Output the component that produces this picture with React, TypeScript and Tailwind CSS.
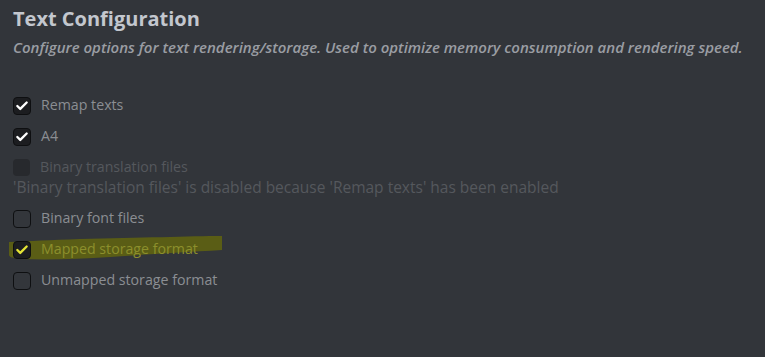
import { Check } from 'lucide-react';

type Option = {
  label: string;
  checked: boolean;
  disabled?: boolean;
  highlighted?: boolean;
};

const options: Option[] = [
  { label: 'Remap texts', checked: true },
  { label: 'A4', checked: true },
  { label: 'Binary translation files', checked: false, disabled: true },
  { label: 'Binary font files', checked: false },
  { label: 'Mapped storage format', checked: true, highlighted: true },
  { label: 'Unmapped storage format', checked: false },
];

function Box({ checked, disabled, highlighted }: { checked: boolean; disabled?: boolean; highlighted?: boolean }) {
  if (disabled) {
    return <div className="w-[17px] h-[17px] rounded-[4px] bg-[#27292d]" />;
  }
  return (
    <div
      className={`w-[18px] h-[18px] rounded-[4px] border border-[#0e0f11] flex items-center justify-center ${
        checked ? 'bg-[#1c1d20]' : 'bg-[#33363b]'
      }`}
    >
      {checked && (
        <Check
          className={`w-[14px] h-[14px] ${highlighted ? 'text-[#e4e436]' : 'text-white'}`}
          strokeWidth={4}
        />
      )}
    </div>
  );
}

function Row({ option }: { option: Option }) {
  const labelColor = option.disabled
    ? 'text-[#55585d]'
    : option.highlighted
      ? 'text-[#8c8f2c]'
      : 'text-[#8b8e93]';
  return (
    <div className="relative flex items-center gap-[10px] h-[31px] pl-[13px]">
      {option.highlighted && (
        <svg className="absolute left-0 -top-[6px] w-[230px] h-[34px]" viewBox="0 0 230 34">
          <path
            d="M9 14 C30 13 50 12 80 11 C140 10 190 8 222 8 L222 22 C190 24 150 26 110 29 C80 31 50 32 20 31 C13 30 9 29 9 27 Z"
            fill="#5a5d15"
          />
        </svg>
      )}
      <div className="relative">
        <Box checked={option.checked} disabled={option.disabled} highlighted={option.highlighted} />
      </div>
      <span className={`relative text-[14.2px] leading-none ${labelColor}`}>{option.label}</span>
    </div>
  );
}

export default function App() {
  return (
    <div
      className="w-[765px] h-[357px] bg-[#32353a] overflow-hidden"
      style={{ fontFamily: '"Open Sans", "Noto Sans", sans-serif' }}
    >
      <div className="pt-[6px]">
        <h1 className="pl-[13px] text-[20px] font-bold text-[#c3c7ce] leading-[26px]">Text Configuration</h1>
        <p className="pl-[13px] mt-[5px] text-[15px] italic font-semibold text-[#9a9da3] leading-[20px]">
          Configure options for text rendering/storage. Used to optimize memory consumption and rendering speed.
        </p>
      </div>
      <div className="mt-[33px]">
        {options.slice(0, 3).map((o) => (
          <Row key={o.label} option={o} />
        ))}
        <div className="pl-[13px] -mt-[6px] h-[26px] text-[15.5px] leading-[20px] text-[#55585d]">
          'Binary translation files' is disabled because 'Remap texts' has been enabled
        </div>
        {options.slice(3).map((o) => (
          <Row key={o.label} option={o} />
        ))}
      </div>
    </div>
  );
}
